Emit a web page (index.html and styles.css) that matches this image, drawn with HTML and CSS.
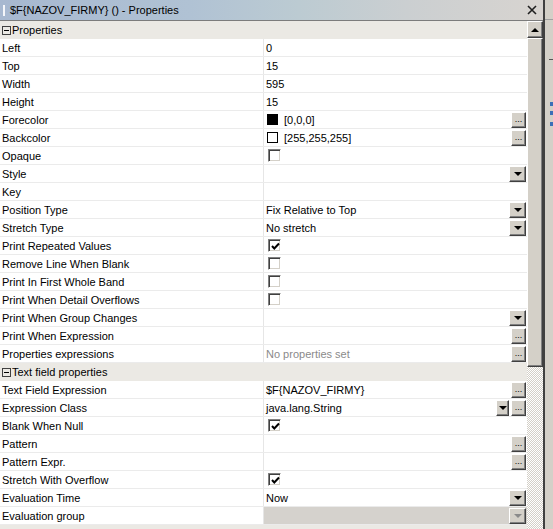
FILE: index.html
```html
<!DOCTYPE html>
<html>
<head>
<meta charset="utf-8">
<link rel="stylesheet" href="styles.css">
</head>
<body>
<div class="screen">
  <div class="window">
    <div class="titlebar">
      <span class="grip"></span>
      <span class="title">$F{NAZOV_FIRMY} () - Properties</span>
      <svg class="close" width="10" height="10" viewBox="0 0 10 10"><path d="M1 1 L9 9 M9 1 L1 9" stroke="#202020" stroke-width="1.6"/></svg>
    </div>
    <div class="body">
      <div class="sheet">
        <div class="section"><span class="toggle"></span>Properties</div>
        <div class="row"><div class="label">Left</div><div class="value"><span class="text">0</span></div></div>
        <div class="row"><div class="label">Top</div><div class="value"><span class="text">15</span></div></div>
        <div class="row"><div class="label">Width</div><div class="value"><span class="text">595</span></div></div>
        <div class="row"><div class="label">Height</div><div class="value"><span class="text">15</span></div></div>
        <div class="row"><div class="label">Forecolor</div><div class="value"><span class="swatch black"></span><span class="text">[0,0,0]</span><span class="btn ell">...</span></div></div>
        <div class="row"><div class="label">Backcolor</div><div class="value"><span class="swatch"></span><span class="text">[255,255,255]</span><span class="btn ell">...</span></div></div>
        <div class="row"><div class="label">Opaque</div><div class="value"><span class="check"></span><span class="text"></span></div></div>
        <div class="row"><div class="label">Style</div><div class="value"><span class="text"></span><span class="btn drop"><i class="tri"></i></span></div></div>
        <div class="row"><div class="label">Key</div><div class="value"><span class="text"></span></div></div>
        <div class="row"><div class="label">Position Type</div><div class="value"><span class="text">Fix Relative to Top</span><span class="btn drop"><i class="tri"></i></span></div></div>
        <div class="row"><div class="label">Stretch Type</div><div class="value"><span class="text">No stretch</span><span class="btn drop"><i class="tri"></i></span></div></div>
        <div class="row"><div class="label">Print Repeated Values</div><div class="value"><span class="check"><svg width="9" height="9" viewBox="0 0 9 9"><path d="M1 4 L3.3 6.5 L8 1.5" fill="none" stroke="#000" stroke-width="2"/></svg></span><span class="text"></span></div></div>
        <div class="row"><div class="label">Remove Line When Blank</div><div class="value"><span class="check"></span><span class="text"></span></div></div>
        <div class="row"><div class="label">Print In First Whole Band</div><div class="value"><span class="check"></span><span class="text"></span></div></div>
        <div class="row"><div class="label">Print When Detail Overflows</div><div class="value"><span class="check"></span><span class="text"></span></div></div>
        <div class="row"><div class="label">Print When Group Changes</div><div class="value"><span class="text"></span><span class="btn drop"><i class="tri"></i></span></div></div>
        <div class="row"><div class="label">Print When Expression</div><div class="value"><span class="text"></span><span class="btn ell">...</span></div></div>
        <div class="row"><div class="label">Properties expressions</div><div class="value"><span class="text muted">No properties set</span><span class="btn ell">...</span></div></div>
        <div class="section"><span class="toggle"></span>Text field properties</div>
        <div class="row"><div class="label">Text Field Expression</div><div class="value"><span class="text">$F{NAZOV_FIRMY}</span><span class="btn ell">...</span></div></div>
        <div class="row"><div class="label">Expression Class</div><div class="value"><span class="text">java.lang.String</span><span class="btn drop narrow"><i class="tri"></i></span><span class="btn ell">...</span></div></div>
        <div class="row"><div class="label">Blank When Null</div><div class="value"><span class="check"><svg width="9" height="9" viewBox="0 0 9 9"><path d="M1 4 L3.3 6.5 L8 1.5" fill="none" stroke="#000" stroke-width="2"/></svg></span><span class="text"></span></div></div>
        <div class="row"><div class="label">Pattern</div><div class="value"><span class="text"></span><span class="btn ell">...</span></div></div>
        <div class="row"><div class="label">Pattern Expr.</div><div class="value"><span class="text"></span><span class="btn ell">...</span></div></div>
        <div class="row"><div class="label">Stretch With Overflow</div><div class="value"><span class="check"><svg width="9" height="9" viewBox="0 0 9 9"><path d="M1 4 L3.3 6.5 L8 1.5" fill="none" stroke="#000" stroke-width="2"/></svg></span><span class="text"></span></div></div>
        <div class="row"><div class="label">Evaluation Time</div><div class="value"><span class="text">Now</span><span class="btn drop"><i class="tri"></i></span></div></div>
        <div class="row"><div class="label">Evaluation group</div><div class="value disabled"><span class="text"></span><span class="btn drop"><i class="tri off"></i></span></div></div>
        <div class="footer"></div>
      </div>
      <div class="vscroll">
        <div class="sb-up"><i class="tri up"></i></div>
        <div class="sb-thumb"></div>
        <div class="sb-track"></div>
      </div>
    </div>
  </div>
  <div class="side">
    <div class="side-top"></div>
    <div class="side-mark"></div>
    <div class="side-dot d1"></div>
    <div class="side-dot d2"></div>
    <div class="side-dot d3"></div>
  </div>
</div>
</body>
</html>
```
FILE: styles.css
```css
* { box-sizing: border-box; }
html, body { margin: 0; padding: 0; }
body {
  width: 553px;
  height: 529px;
  overflow: hidden;
  background: #d4d0c8;
  font-family: "Liberation Sans", Arial, sans-serif;
  font-size: 11px;
  color: #000;
}
.screen { display: flex; width: 553px; height: 529px; }
.window { width: 543px; display: flex; flex-direction: column; }
.titlebar {
  height: 21px;
  display: flex;
  align-items: center;
  background: linear-gradient(90deg, #a7b8d0 0%, #b0c2d4 35%, #bccbd2 55%, #cbcfd1 75%, #d8d4d0 100%);
  border-bottom: 1px solid #7c7c7c;
  padding-left: 3px;
}
.grip { width: 2px; height: 11px; background: #f4f6fa; margin-right: 5px; }
.title { flex: 1; font-size: 11px; color: #000; }
.close { margin-right: 6px; }
.body { flex: 1; display: flex; min-height: 0; }
.sheet { width: 527px; display: flex; flex-direction: column; background: #fff; }
.section {
  height: 18px;
  display: flex;
  align-items: center;
  background: #ebe9e4;
  padding-left: 2px;
}
.toggle {
  width: 9px; height: 9px;
  border: 1px solid #404040;
  margin-right: 1px;
  position: relative;
  background: #fff0;
}
.toggle::after {
  content: ""; position: absolute; left: 1px; top: 3px; width: 5px; height: 1px; background: #000;
}
.row { height: 18px; display: flex; border-bottom: 1px solid #ebebeb; }
.label {
  width: 264px;
  border-right: 1px solid #e6e6e6;
  padding-left: 2px;
  display: flex; align-items: center;
  white-space: nowrap;
}
.value {
  flex: 1;
  display: flex; align-items: center;
  padding-left: 2px;
  padding-right: 1px;
  white-space: nowrap;
}
.value.disabled { background: #d5d2cd; }
.text { flex: 1; }
.muted { color: #8a8a8a; }
.swatch {
  width: 11px; height: 11px; border: 1px solid #000; background: #fff;
  margin-left: 1px; margin-right: 6px;
}
.swatch.black { background: #000; }
.check {
  width: 13px; height: 13px;
  margin-left: 2px;
  border: 1px solid;
  border-color: #808080 #fff #fff #808080;
  box-shadow: inset 1px 1px #404040, inset -1px -1px #d4d0c8;
  background: #fff;
  display: flex; align-items: center; justify-content: center;
}
.check svg { margin-left: 1px; margin-top: 1px; }
.btn {
  height: 16px;
  background: #d4d0c8;
  border: 1px solid;
  border-color: #fff #404040 #404040 #fff;
  box-shadow: inset -1px -1px #808080;
  display: flex; align-items: center; justify-content: center;
}
.btn.drop { width: 17px; }
.btn.drop.narrow { width: 13px; margin-right: 2px; }
.btn.ell {
  width: 15px;
  font-size: 9px;
  line-height: 9px;
  align-items: flex-end;
  padding-bottom: 3px;
  letter-spacing: 0px;
}
.tri {
  width: 0; height: 0;
  border-left: 4px solid transparent;
  border-right: 4px solid transparent;
  border-top: 4px solid #000;
  margin-top: 1px;
}
.tri.off { border-top-color: #8a8a8a; }
.tri.up { border-top: 0; border-bottom: 4px solid #000; margin-top: 0; }
.footer { flex: 1; background: #ebe9e4; }
.vscroll { width: 16px; display: flex; flex-direction: column; }
.sb-up {
  height: 17px;
  background: #d4d0c8;
  border: 1px solid;
  border-color: #fff #404040 #404040 #fff;
  box-shadow: inset -1px -1px #808080;
  display: flex; align-items: center; justify-content: center;
}
.sb-thumb {
  height: 329px;
  background: #d4d0c8;
  border: 1px solid;
  border-color: #fff #404040 #404040 #fff;
  box-shadow: inset -1px -1px #808080;
}
.sb-track {
  flex: 1;
  background-color: #fff;
  background-image: conic-gradient(#d4d0c8 25%, #fff 0 50%, #d4d0c8 0 75%, #fff 0);
  background-size: 2px 2px;
}
.side {
  width: 10px;
  background: #d4d0c8;
  border-left: 2px solid #404040;
  display: flex; flex-direction: column;
  align-items: flex-end;
}
.side-top { width: 100%; height: 20px; border-bottom: 1px solid #a0a0a0; }
.side-mark { width: 4px; height: 1px; background: #555; margin-top: 39px; }
.side-dot { width: 3px; height: 4px; background: #3d6fb7; }
.d1 { margin-top: 42px; }
.d2 { margin-top: 5px; }
.d3 { margin-top: 7px; }
```
